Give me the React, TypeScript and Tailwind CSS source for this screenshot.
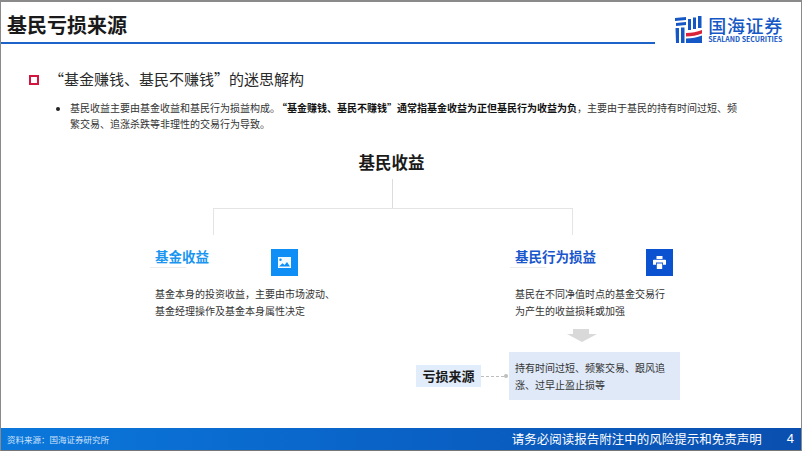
const cjk = { fontFamily: '"Noto Sans CJK SC", "Noto Sans", sans-serif' };

function LogoMark() {
  return (
    <svg width="27" height="28" viewBox="0 0 27 28" className="shrink-0">
      <path d="M0 2l11-1v3L0 5zM1 7l10-1v3L1 10z" fill="#1557c4" />
      <path d="M0.500 12h3.500v15H1zM6 11.500h3.500V27H6z" fill="#1557c4" />
      <path d="M13 3h3v11h-3zM18 1.500h3V13h-3zM23 0h3.500v12H23z" fill="#1557c4" />
      <path d="M11 17c6 0 11-1 16-3v3.500c-5 2-10 3-16 3z" fill="#d8233a" />
      <path d="M11 22.500c6 0 11-1 16-3V27H11z" fill="#1557c4" />
    </svg>
  );
}

function CardTitle({ title, color }: { title: string; color: string }) {
  return (
    <div className="pl-[5px]">
      <div className={`h-[24px] pt-[3px] text-[13.5px] leading-[18px] font-bold whitespace-nowrap ${color}`}>{title}</div>
      <div className="mt-[-1px] h-px w-[36px] -translate-x-[5px] bg-[#ececec]" />
    </div>
  );
}

function ImgIcon() {
  return (
    <svg width="13" height="11" viewBox="0 0 13 11">
      <path fillRule="evenodd" d="M0 0h13v11H0zM2.500 1.500a1.200 1.200 0 100 2.400 1.200 1.200 0 000-2.400zM1 9.500h11L9 5 6.500 8 4.500 6.200z" fill="#fff" opacity="0.95" />
    </svg>
  );
}

function PrintIcon() {
  return (
    <svg width="13" height="13" viewBox="0 0 13 13">
      <path d="M3.500 0h6v3h-6zM0.800 3.800h11.400a.8.8 0 01.8.8v4.200h-3V6.600H3v2.200H0V4.600a.8.8 0 01.8-.8zM3.800 7.400h5.400V13H3.800z" fill="#fff" />
    </svg>
  );
}

export default function App() {
  return (
    <div style={cjk} className="relative flex h-[451px] w-[802px] flex-col overflow-hidden border-t-2 border-r border-l border-[#8a8a8a] bg-white text-[#222]">
      <header className="flex h-[42px] shrink-0 items-start justify-between">
        <div className="flex h-full w-[654px] flex-col justify-between">
          <h1 className="pl-[6px] pt-[9px] text-[20px] leading-[27px] font-bold text-[#1a1a1a]">基民亏损来源</h1>
          <div className="h-[2.500px] w-full bg-[#1c62c8]" />
        </div>
        <div className="mr-[18px] flex items-center gap-[6px] pt-[14px]">
          <LogoMark />
          <div className="flex flex-col">
            <span className="text-[18px] leading-[17px] font-medium tracking-[0.7px] whitespace-nowrap text-[#1557c4]">国海证券</span>
            <span className="mt-[2px] text-[7px] leading-[7px] font-bold whitespace-nowrap text-[#1557c4]">SEALAND SECURITIES</span>
          </div>
        </div>
      </header>

      <main className="relative flex-1">
        <section className="pt-[24px] pl-[28px]">
          <div className="flex items-center gap-[10px]">
            <div className="mt-[1px] h-[10px] w-[10px] border-[2px] border-[#d3163f]" />
            <h2 className="text-[15px] leading-[22px] whitespace-nowrap text-[#2a2a2a]">“基金赚钱、基民不赚钱”的迷思解构</h2>
          </div>
          <div className="mt-[10px] flex pl-[27px] text-[10px] leading-[16px] text-[#333]">
            <span className="mt-[6.500px] mr-[10px] h-[4px] w-[4px] shrink-0 rounded-full bg-[#222]" />
            <p className="whitespace-nowrap">
              基民收益主要由基金收益和基民行为损益构成。<b className="ml-[2px] text-[#111]">“基金赚钱、基民不赚钱”通常指基金收益为正但基民行为收益为负</b>，主要由于基民的持有时间过短、频
              <br />
              繁交易、追涨杀跌等非理性的交易行为导致。
            </p>
          </div>
        </section>

        <section className="relative mt-[18px] flex flex-col items-center pr-[19px]">
          <div className="text-[16.500px] leading-[24px] font-bold text-[#1a1a1a]">基民收益</div>
        </section>

        <div className="absolute top-[135px] left-[391px] h-[29px] w-px bg-[#dcdcdc]" />
        <div className="absolute top-[164px] left-[212px] h-[27px] w-[360px] border-t border-r border-l border-[#e4e4e4]" />

        <section className="mt-[70px] ml-[149px] flex items-start">
          <div className="relative w-[360px]">
            <CardTitle title="基金收益" color="text-[#1a96f0]" />
            <div className="absolute top-[5px] left-[121px] flex h-[27px] w-[27px] items-center justify-center bg-[#0f8ff5]"><ImgIcon /></div>
            <div className="mt-[17px] pl-[5px] text-[10px] leading-[17px] text-[#333]">
              <div>基金本身的投资收益，主要由市场波动、</div>
              <div>基金经理操作及基金本身属性决定</div>
            </div>
          </div>
          <div className="relative w-[175px]">
            <CardTitle title="基民行为损益" color="text-[#1a56cc]" />
            <div className="absolute top-[5px] left-[136px] flex h-[27px] w-[27px] items-center justify-center bg-[#0b52d0]"><PrintIcon /></div>
            <div className="mt-[17px] pl-[5px] text-[10px] leading-[17px] text-[#333]">
              <div className="whitespace-nowrap">基民在不同净值时点的基金交易行</div>
              <div>为产生的收益损耗或加强</div>
            </div>
            <div className="mt-[10px] ml-[54px] h-[13px] w-[36px]">
              <svg width="36" height="13" viewBox="0 0 36 13"><path d="M9 0h16v5h8L18 13 3 5h6z" fill="#d9d9d9" /></svg>
            </div>
          </div>
        </section>

        <section className="mt-[10px] ml-[415px] flex items-center">
          <div className="flex h-[22px] w-[65px] items-center justify-center bg-[#e2edfb] text-[13px] font-bold whitespace-nowrap text-[#1a1a1a]">亏损来源</div>
          <div className="h-0 w-[23px] border-t border-dashed border-[#bdbdbd]" />
          <div className="h-[4px] w-[4px] rounded-full bg-[#bdbdbd]" />
          <div className="ml-[1px] flex h-[48px] w-[171px] flex-col justify-center bg-[#dfe9f8] pl-[6px] text-[10px] leading-[17px] text-[#333]">
            <div className="whitespace-nowrap">持有时间过短、频繁交易、跟风追</div>
            <div>涨、过早止盈止损等</div>
          </div>
        </section>
      </main>

      <footer className="flex h-[23px] shrink-0 items-center justify-between border-b border-[#777] bg-gradient-to-r from-[#0b78dc] via-[#0a62c6] to-[#0a4fb0] pr-[7px] pl-[6px] text-white">
        <span className="text-[8.500px] text-[#cfe3fb]">资料来源：国海证券研究所</span>
        <div className="flex items-center">
          <span className="text-[12.500px] whitespace-nowrap">请务必阅读报告附注中的风险提示和免责声明</span>
          <span className="ml-[25px] text-[13px]" style={{ fontFamily: '"Liberation Sans", sans-serif' }}>4</span>
        </div>
      </footer>
    </div>
  );
}
